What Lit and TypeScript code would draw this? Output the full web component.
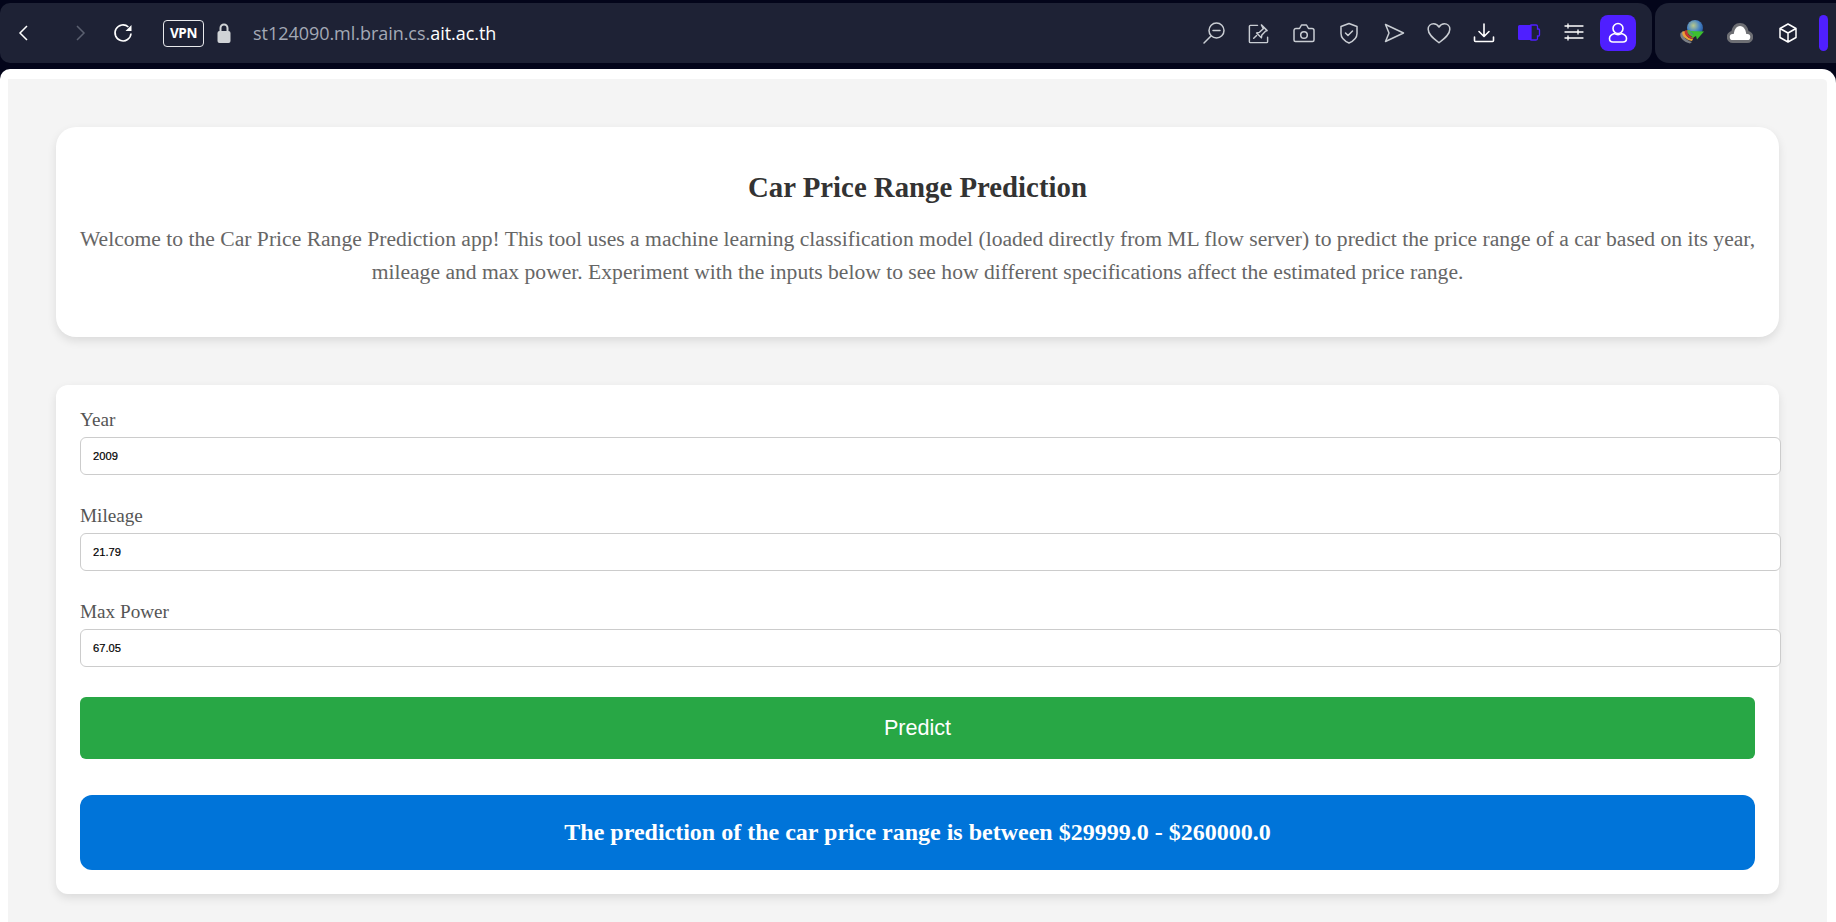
import { LitElement, html, css, svg } from "lit";
import { customElement } from "lit/decorators.js";

const sw = (body: unknown, size = 24, color = "#c9cdd3", width = 1.5) => html`<svg width=${size} height=${size} viewBox="0 0 24 24" fill="none" stroke=${color} stroke-width=${width} stroke-linecap="round" stroke-linejoin="round">${body}</svg>`;

const icons = [
  sw(svg`<circle cx="14.500" cy="9.500" r="7.500"/><path d="M11 9.500h7M9 15l-7 7"/>`),
  sw(svg`<path d="M11 3.500H3.500a1 1 0 0 0-1 1v16a1 1 0 0 0 1 1H20.500a1 1 0 0 0 1-1V16"/><path d="M15 3l6 6-2 .8-3.500 3.700-.5 3-5-5 3-.7L17 7z"/><path d="M10 14l-3 3"/>`, 23),
  sw(svg`<path d="M2 9.500a2 2 0 0 1 2-2h3.500L9.500 4h5l2 3.500H20a2 2 0 0 1 2 2V19a1.500 1.500 0 0 1-1.500 1.500h-17A1.500 1.500 0 0 1 2 19z"/><circle cx="12" cy="14" r="3.300"/>`),
  sw(svg`<path d="M12 2.500l8 3v7c0 4.500-3.500 7.500-8 9.500-4.500-2-8-5-8-9.500v-7z"/><path d="M8.500 12l2.500 2.500 4.500-4.500"/>`),
  sw(svg`<path d="M3.500 3.500L21.500 12 3.500 20.500l3.500-8.500z"/>`),
  sw(svg`<path d="M12 21C6 16.500 2 13 2 8.500 2 5.500 4.300 3.500 7 3.500c2 0 3.800 1 5 3 1.200-2 3-3 5-3 2.700 0 5 2 5 5 0 4.500-4 8-10 12.500z"/>`, 26, "#c9cdd3", 1.4),
  sw(svg`<path d="M12 3v12M7 10.500l5 5 5-5M2.500 16v3.500a1 1 0 0 0 1 1h17a1 1 0 0 0 1-1V16"/>`, 24, "#ffffff", 1.6),
  html`<svg width="24" height="24" viewBox="0 0 24 24"><path d="M1 5.500a1.500 1.500 0 0 1 1.500-1.500H14v15H2.500A1.500 1.500 0 0 1 1 17.500z" fill="#4f1fff"/><path d="M14 4h5a1.500 1.500 0 0 1 1.500 1.500V8h1a1 1 0 0 1 1 1v5a1 1 0 0 1-1 1h-1v2.500A1.500 1.500 0 0 1 19 19h-5z" fill="none" stroke="#4f1fff" stroke-width="1.300"/></svg>`,
  sw(svg`<path d="M3 5h18M3 11h18M3 17h18M6 3v4M16 9v4M6 15v4"/>`, 24, "#ffffff", 1.3),
];

@customElement("app-root")
export class AppRoot extends LitElement {
  static styles = css`
    :host { display: block; width: 1836px; height: 922px; overflow: hidden; background: #03051a; font-family: "Liberation Serif", serif; }
    .chrome { display: flex; gap: 3px; height: 69px; padding: 3px 0 6px; box-sizing: border-box; }
    .panel { background: #1e2235; height: 60px; display: flex; align-items: center; }
    .main { flex: 1; border-radius: 10px 14px 14px 10px; padding: 0 16px 0 0; }
    .side { width: 181px; flex: none; border-radius: 14px 0 0 14px; position: relative; padding-left: 13px; box-sizing: border-box; }
    .nav { width: 24px; height: 24px; display: flex; }
    .back { margin-left: 12px; }
    .fwd { margin-left: 32px; }
    .reload { margin-left: 19px; }
    .vpn { margin-left: 28px; width: 41px; height: 27px; box-sizing: border-box; border: 1.500px solid #e8e9ec; border-radius: 4px; color: #fff; font: 700 13.500px "Open Sans", sans-serif; display: flex; align-items: center; justify-content: center; letter-spacing: -0.4px; }
    .lock { margin-left: 13px; display: flex; }
    .url { margin-left: 22px; font: 400 18px "Open Sans", sans-serif; color: #a3a9b5; letter-spacing: -0.04px; white-space: nowrap; }
    .url b { color: #fff; font-weight: 400; }
    .tools { margin-left: auto; display: flex; align-items: center; }
    .tool { width: 45px; height: 36px; display: flex; align-items: center; justify-content: center; }
    .user { width: 36px; height: 36px; border-radius: 8px; background: #4f1fff; display: flex; align-items: center; justify-content: center; margin-left: 4px; }
    .ext { width: 48px; display: flex; justify-content: center; }
    .bar { position: absolute; right: 8px; top: 12px; width: 9px; height: 36px; border-radius: 5px; background: #4f1fff; }
    .frame { background: #f4f4f4; height: 853px; box-sizing: border-box; border: solid #fff; border-width: 10px 9px 0 8px; border-radius: 10px 14px 0 0; padding: 48px 48px 0; overflow: hidden; }
    .card { background: #fff; box-shadow: 0 4px 10px rgba(0,0,0,.1); box-sizing: border-box; }
    .intro { height: 210px; border-radius: 20px; padding: 24px; text-align: center; margin-bottom: 48px; }
    h1 { margin: 19px 0 0; font-size: 28.800px; line-height: 34px; font-weight: 700; color: #333; }
    .intro p { margin: 19px -4px 0; font-size: 21.600px; line-height: 33px; color: #666; }
    .form { height: 509px; border-radius: 12px; padding: 24px; }
    .field { height: 96px; }
    label { display: block; font-size: 19.200px; line-height: 22px; height: 28px; color: #555; }
    .input { width: calc(100% + 26px); height: 38px; box-sizing: border-box; border: 1px solid #ccc; border-radius: 6px; padding: 0 12px; background: #fff; font: 11.200px "Liberation Sans", sans-serif; -webkit-text-stroke: 0.2px #000; color: #000; display: block; outline: none; }
    .predict { display: block; width: 100%; height: 62px; border: 0; border-radius: 6px; background: #28a745; color: #fff; font: 21.600px "Liberation Sans", sans-serif; }
    .result { height: 75px; margin-top: 36px; border-radius: 12px; background: #0074d9; color: #fff; font-size: 24px; font-weight: 700; display: flex; align-items: center; justify-content: center; }
  `;

  render() {
    return html`
      <div class="chrome">
        <div class="panel main">
          <span class="nav back"><svg width="24" height="24" viewBox="0 0 24 24" fill="none" stroke="#fff" stroke-width="1.500"><path d="M15 5L8 12l7 7"/></svg></span>
          <span class="nav fwd"><svg width="24" height="24" viewBox="0 0 24 24" fill="none" stroke="#5b6070" stroke-width="1.500"><path d="M9 5l7 7-7 7"/></svg></span>
          <span class="nav reload"><svg width="24" height="24" viewBox="0 0 24 24" fill="none" stroke="#fff" stroke-width="1.600"><path d="M20 12.500a8 8 0 1 1-2.600-6.500"/><path d="M20.500 4v6h-6z" fill="#fff" stroke="none"/></svg></span>
          <span class="vpn">VPN</span>
          <span class="lock"><svg width="14" height="20" viewBox="0 0 14 20"><path d="M3.500 9V5a3.500 3.500 0 0 1 7 0v4" fill="none" stroke="#d0d3d6" stroke-width="2"/><rect x="0.500" y="8" width="13" height="12" rx="2" fill="#d0d3d6"/></svg></span>
          <span class="url">st124090.ml.brain.cs.<b>ait.ac.th</b></span>
          <div class="tools">
            ${icons.map((i) => html`<span class="tool">${i}</span>`)}
            <span class="user"><svg width="24" height="24" viewBox="0 0 24 24" fill="none" stroke="#fff" stroke-width="1.600"><circle cx="12" cy="7.500" r="5"/><path d="M8.500 12.500C5 13.500 3.500 15.500 3.500 17.500c0 2.200 1.500 3.500 3.500 3.500h10c2 0 3.500-1.300 3.500-3.500 0-2-1.500-4-5-5-1 .8-2.300 1.200-3.500 1.200s-2.500-.4-3.500-1.200z"/></svg></span>
          </div>
        </div>
        <div class="panel side">
          <span class="ext"><svg width="26" height="26" viewBox="0 0 26 26">
            <defs><radialGradient id="g" cx=".4" cy=".35" r=".7"><stop offset="0" stop-color="#b9c98a"/><stop offset=".55" stop-color="#4a86c5"/><stop offset="1" stop-color="#1f4f99"/></radialGradient></defs>
            <circle cx="16" cy="8" r="8" fill="url(#g)"/>
            <path d="M1.500 13C0 18 5 22 11 23.500l2-1.500C7 20 3.500 17.500 4.500 11z" fill="#7b7f85"/>
            <path d="M3.500 11.500C2 15.500 7 20 13 21l1-2c-5-.5-8-3.500-7-8z" fill="#e9a33a"/>
            <path d="M6 10.500C4.500 14 8 18 14 19l1-2c-5-.5-7-3.500-6-7z" fill="#c5362f"/>
            <path d="M8.500 10c-1 3 2 6 6.500 7l1-2c-3-.5-5-2-5-5z" fill="#57ad44"/>
            <path d="M11 11l14 .5-7 8-1-3.500-5 2.500 2.500-4z" fill="#3cc02e"/>
          </svg></span>
          <span class="ext"><svg width="26" height="22" viewBox="0 0 26 22"><path d="M6 19.500a4.500 4.500 0 0 1-.5-9C6.500 5.500 9.500 2.500 13 2.500s6.500 3 7.500 8a4.500 4.500 0 0 1-.5 9z" fill="#fff" stroke="#6e6f74" stroke-width="3"/></svg></span>
          <span class="ext"><svg width="22" height="22" viewBox="0 0 22 22" fill="none" stroke="#fff" stroke-width="1.500" stroke-linejoin="round"><path d="M11 2l8 4.500v9L11 20l-8-4.500v-9zM3 6.500l8 4.500 8-4.500M11 11v9"/></svg></span>
          <span class="bar"></span>
        </div>
      </div>
      <div class="frame">
        <section class="card intro">
          <h1>Car Price Range Prediction</h1>
          <p>Welcome to the Car Price Range Prediction app! This tool uses a machine learning classification model (loaded directly from ML flow server) to predict the price range of a car based on its year, mileage and max power. Experiment with the inputs below to see how different specifications affect the estimated price range.</p>
        </section>
        <section class="card form">
          <div class="field"><label>Year</label><input class="input" .value=${"2009"} /></div>
          <div class="field"><label>Mileage</label><input class="input" .value=${"21.79"} /></div>
          <div class="field"><label>Max Power</label><input class="input" .value=${"67.05"} /></div>
          <button class="predict">Predict</button>
          <div class="result">The prediction of the car price range is between $29999.0 - $260000.0</div>
        </section>
      </div>
    `;
  }
}
